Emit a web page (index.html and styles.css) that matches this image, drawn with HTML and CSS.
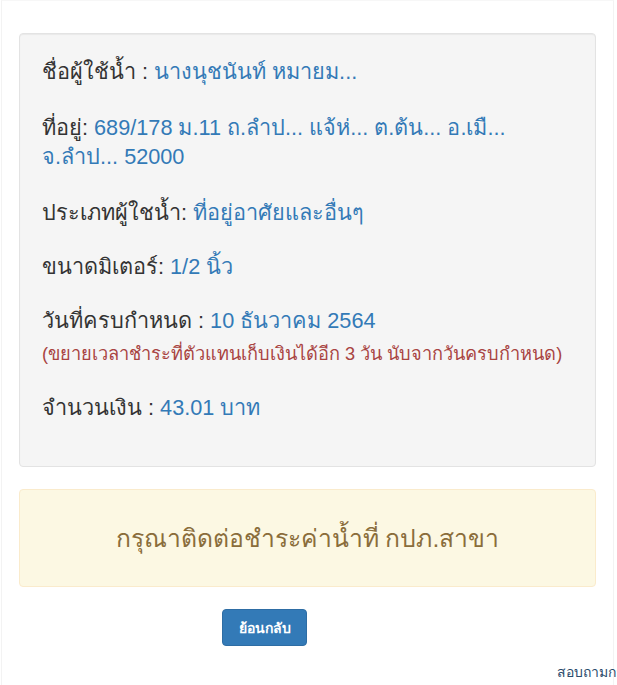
FILE: index.html
```html
<!DOCTYPE html>
<html lang="th">
<head>
<meta charset="utf-8">
<link rel="stylesheet" href="styles.css">
</head>
<body>
<div class="frame">
  <div class="container">
    <div class="well">
      <p class="row r1">ชื่อผู้ใช้น้ำ : <span class="val">นางนุชนันท์ หมายม...</span></p>
      <p class="row r2">ที่อยู่: <span class="val">689/178 ม.11 ถ.ลำป... แจ้ห่... ต.ต้น... อ.เมื... จ.ลำป... 52000</span></p>
      <p class="row">ประเภทผู้ใชน้ำ: <span class="val">ที่อยู่อาศัยและอื่นๆ</span></p>
      <p class="row">ขนาดมิเตอร์: <span class="val">1/2 นิ้ว</span></p>
      <p class="row due">วันที่ครบกำหนด : <span class="val">10 ธันวาคม 2564</span></p>
      <p class="note">(ขยายเวลาชำระที่ตัวแทนเก็บเงินได้อีก 3 วัน นับจากวันครบกำหนด)</p>
      <p class="row last">จำนวนเงิน : <span class="val">43.01 บาท</span></p>
    </div>
    <div class="alert">กรุณาติดต่อชำระค่าน้ำที่ กปภ.สาขา</div>
    <div class="actions"><button class="btn" type="button">ย้อนกลับ</button></div>
  </div>
  <div class="footer"><span>สอบถามการใช้งาน</span></div>
</div>
</body>
</html>
```
FILE: styles.css
```css
html, body {
  margin: 0;
  padding: 0;
  background: #fff;
  overflow: hidden;
}
body {
  font-family: "Liberation Sans", Arial, sans-serif;
  color: #333;
}
.frame {
  width: 613px;
  height: 685px;
  margin-left: 1px;
  border-left: 1px solid #f3f3f3;
  border-right: 1px solid #f3f3f3;
  border-top: 1px solid #f7f7f7;
  box-sizing: border-box;
}
.container {
  padding: 32px 0 0 17px;
  width: 577px;
}
.well {
  background: #f5f5f5;
  border: 1px solid #e3e3e3;
  border-radius: 4px;
  box-shadow: inset 0 1px 1px rgba(0,0,0,0.05);
  padding: 23px 22px 44px 22px;
}
.row {
  font-size: 21.7px;
  line-height: 29px;
  margin: 0 0 25px 0;
}
.row.r1, .row.r2 { margin-bottom: 27px; }
.row.due { margin-bottom: 7px; }
.row.last { margin-bottom: 0; }
.val { color: #337ab7; }
.note {
  color: #a94442;
  font-size: 18.2px;
  line-height: 24px;
  margin: 0 0 27px 0;
}
.alert {
  margin-top: 22px;
  background: #fcf8e3;
  border: 1px solid #faebcc;
  border-radius: 4px;
  color: #8a6d3b;
  font-size: 24.7px;
  height: 96px;
  display: flex;
  align-items: center;
  justify-content: center;
}
.actions {
  width: 491px;
  display: flex;
  justify-content: center;
  padding-top: 22px;
}
.btn {
  background: #337ab7;
  border: 1px solid #2e6da4;
  border-radius: 4px;
  color: #fff;
  font-family: "Liberation Sans", Arial, sans-serif;
  font-weight: bold;
  font-size: 14px;
  width: 85px;
  height: 37px;
  padding: 0;
}
.footer {
  padding: 15px 0 0 555px;
  white-space: nowrap;
  font-size: 14px;
  color: #2a4a6b;
}
```
